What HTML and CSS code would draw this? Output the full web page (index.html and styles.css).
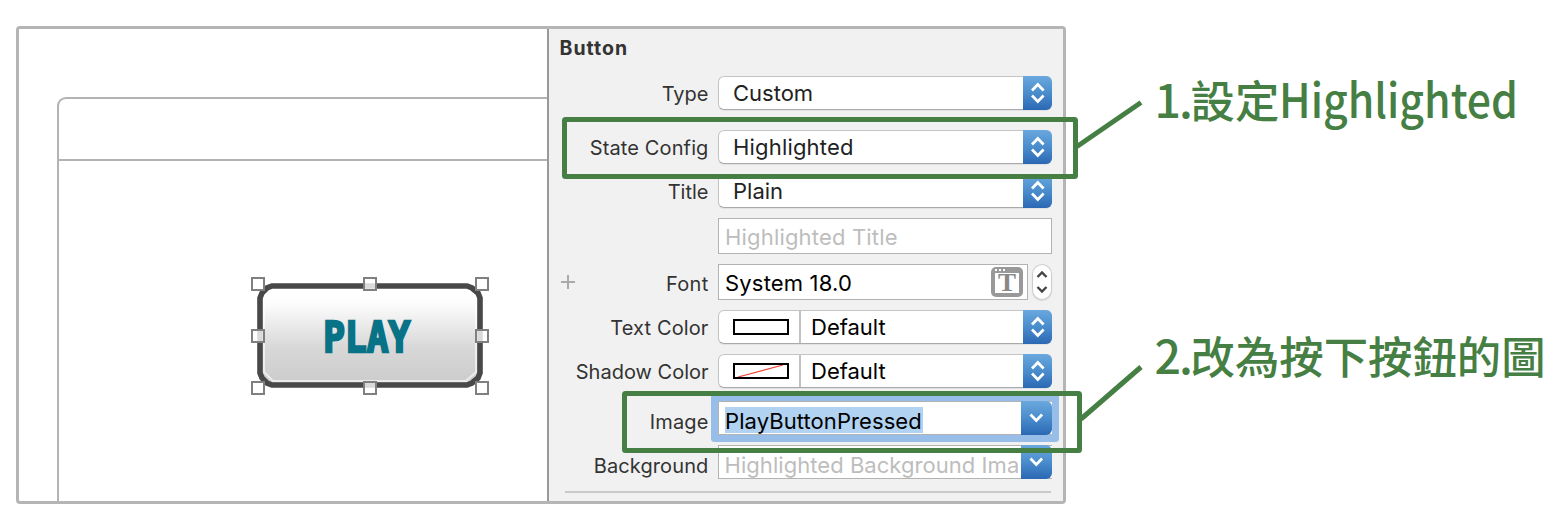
FILE: index.html
```html
<!DOCTYPE html>
<html lang="zh-Hant">
<head>
<meta charset="utf-8">
<title>Button inspector</title>
<link rel="stylesheet" href="styles.css">
</head>
<body>
<svg class="defs" width="0" height="0">
  <defs>
    <symbol id="updown" viewBox="0 0 28 34"><path d="M8.5 14.5 14.3 8.5 20.1 14.5M8.5 19.5 14.3 25.5 20.1 19.5"/></symbol>
    <symbol id="down" viewBox="0 0 31 34"><path d="M9.5 13.5 15.3 19.5 21.1 13.5"/></symbol>
  </defs>
</svg>
<div class="page">
  <main class="window">
    <section class="canvas">
      <div class="device">
        <div class="navbar"></div>
        <div class="stage">
          <div class="play">
            <svg class="play-art" width="240" height="120" viewBox="0 0 240 120">
              <defs><linearGradient id="face" x1="0" y1="0" x2="0" y2="1"><stop offset="0" stop-color="#fff"/><stop offset=".17" stop-color="#fdfdfd"/><stop offset=".62" stop-color="#d8d8d8"/><stop offset="1" stop-color="#cbcbcb"/></linearGradient></defs>
              <path d="M22 10H217L222 12 228 17 230 22V97L228 102 222 107 217 109H22L17 107 12 102 10 97V22L12 17 17 12Z" fill="url(#face)" stroke="#484848" stroke-width="5.6"/>
              <path d="M23 14H216L226 23V96L216 105H23L14 96V23Z" fill="none" stroke="#fff" stroke-opacity=".6" stroke-width="2"/>
              <g fill="#fff" fill-opacity=".8" stroke="#808080" stroke-width="2">
                <path d="M2 2H14V14H2ZM226 2H238V14H226ZM2 106H14V118H2ZM226 106H238V118H226Z" fill-opacity="1"/>
                <path d="M114 2H126V14H114ZM2 54H14V66H2ZM226 54H238V66H226ZM114 106H126V118H114Z"/>
              </g>
            </svg>
            <span class="play-text">PLAY</span>
          </div>
        </div>
      </div>
    </section>
    <section class="inspector">
      <h1 class="heading">Button</h1>
      <div class="row type"><span class="label">Type</span>
        <div class="popup"><span class="value">Custom</span><svg class="knob"><use href="#updown"/></svg></div></div>
      <div class="row state"><span class="label state-label">State Config</span>
        <div class="popup"><span class="value spaced">Highlighted</span><svg class="knob"><use href="#updown"/></svg></div></div>
      <div class="row"><span class="label">Title</span>
        <div class="popup"><span class="value">Plain</span><svg class="knob"><use href="#updown"/></svg></div></div>
      <div class="row"><span class="label"></span>
        <div class="field"><span class="hint spaced">Highlighted Title</span></div></div>
      <div class="row"><svg class="plus" width="14" height="14"><path d="M0 7H14M7 0V14"/></svg><span class="label font-label">Font</span>
        <div class="field font-field"><span class="spaced">System 18.0</span>
          <svg class="font-icon" width="32" height="30" viewBox="0 0 32 30"><rect width="32" height="30" rx="5" fill="#999"/><path d="M4 6H28V26H4Z" fill="#fff"/><path d="M4 2H6V4H4ZM8 2H10V4H8ZM12 2H14V4H12Z" fill="#fff"/><text x="16" y="24" text-anchor="middle" textLength="18" lengthAdjust="spacingAndGlyphs">T</text></svg></div>
        <svg class="stepper" width="20" height="36"><path d="M5.5 13 10 8.5 14.5 13M5.5 23 10 27.5 14.5 23"/></svg></div>
      <div class="row"><span class="label state-label">Text Color</span>
        <div class="popup"><span class="well"><i class="swatch"></i></span><span class="value">Default</span><svg class="knob"><use href="#updown"/></svg></div></div>
      <div class="row"><span class="label">Shadow Color</span>
        <div class="popup"><span class="well"><i class="swatch"><svg width="52" height="12"><path d="M3 12 48 0" stroke="#f04438" stroke-width="1.2"/></svg></i></span><span class="value">Default</span><svg class="knob"><use href="#updown"/></svg></div></div>
      <div class="row image"><span class="label low">Image</span>
        <div class="combo focused"><span class="selected">PlayButtonPressed</span><svg class="knob wide"><use href="#down"/></svg></div></div>
      <div class="row"><span class="label low">Background</span>
        <div class="combo"><span class="hint background-hint">Highlighted Background Ima</span><svg class="knob wide"><use href="#down"/></svg></div></div>
      <div class="rule"></div>
    </section>
  </main>
  <aside class="notes">
    <p class="note"><span class="number">1.</span>設定<span class="latin">Highlighted</span></p>
    <p class="note second"><span class="number">2.</span>改為按下按鈕的圖</p>
  </aside>
  <svg class="callouts" width="1565" height="526">
    <rect x="564.5" y="119.5" width="511" height="57" rx="1"/>
    <rect x="624.5" y="393.5" width="455" height="57" rx="1"/>
    <path d="M1077 146.5 1141 102.5M1081 419 1141 367"/>
  </svg>
</div>
</body>
</html>
```
FILE: styles.css
```css
* { box-sizing: border-box; }
body { margin: 0; background: #fff; font-family: Inter, "Liberation Sans", sans-serif; }
.defs { position: absolute; }
.page { position: relative; display: flex; width: 1565px; height: 526px; padding: 26px 0 0 16px; overflow: hidden; }
.window { display: flex; flex: none; width: 1050px; height: 478px; border: 3px solid #b5b5b5; border-radius: 4px; }
.canvas { width: 528px; padding: 68px 0 0 38px; overflow: hidden; }
.device { height: 404px; border: 2px solid #b3b3b3; border-width: 2px 0 0 2px; border-top-left-radius: 9px; }
.navbar { height: 62px; border-bottom: 2px solid #b3b3b3; }
.stage { padding: 115px 0 0 191px; }
.play { position: relative; width: 240px; height: 120px; display: flex; align-items: center; justify-content: center; }
.play-art { position: absolute; left: 0; top: 0; }
.play-text { position: relative; font: bold 43px/44px "DejaVu Sans Mono", monospace; color: #087286; transform: translate(-3px, 1px) scaleX(.84); -webkit-text-stroke: 2.4px #087286; text-shadow: 0 0 3px #f3dcdc; }

.inspector { width: 517px; padding: 6px 11px 0 10px; border-left: 2px solid #999; background: #f1f1f1; color: #333; }
.heading { margin: 0; height: 26px; padding-left: 1px; font-size: 19.5px; line-height: 26px; font-weight: 700; letter-spacing: 1px; }
.row { position: relative; display: flex; align-items: center; margin-bottom: 10px; }
.type { margin-top: 15px; margin-bottom: 20px; }
.image { margin-top: 13px; }
.label { width: 150px; margin-right: 9px; text-align: right; font-size: 20px; line-height: 30px; white-space: nowrap; padding-top: 2px; }
.state-label { letter-spacing: .12px; }
.font-label { padding-top: 4px; letter-spacing: .3px; }
.low { line-height: 24px; padding-top: 8px; letter-spacing: .12px; }
.plus { position: absolute; left: 2px; top: 11px; stroke: #aaa; stroke-width: 2; }
.popup { display: flex; align-items: stretch; width: 334px; height: 34px; border: 1px solid #c4c4c4; border-bottom-color: #aaa; border-radius: 6px; background: #fff; box-shadow: 0 1px 1px #0001; color: #222; font-size: 22px; line-height: 32px; }
.value { flex: 1; padding-left: 14.5px; white-space: nowrap; }
.spaced { letter-spacing: .18px; }
.knob { flex: none; width: 29px; height: 34px; margin: -1px -1px -1px 0; border-radius: 0 6px 6px 0; background: linear-gradient(#6aa8dd, #4a8dcd 50%, #2b68b4); fill: none; stroke: #fff; stroke-width: 2.7; }
.wide { width: 31px; }
.well { width: 82px; padding: 8px 0 0 14px; border-right: 2px solid #c2c2c2; }
.well + .value { padding-left: 10.5px; color: #000; }
.swatch { display: block; width: 56px; height: 16px; border: 2px solid #000; }
.swatch svg { display: block; }
.field { display: flex; align-items: center; justify-content: space-between; width: 334px; height: 36px; padding-left: 6.5px; padding-top: 2px; border: 1px solid #b3b3b3; background: #fff; color: #000; font-size: 22px; line-height: 32px; white-space: nowrap; }
.hint { color: #bdbdbd; }
.background-hint { padding-top: 6px; letter-spacing: .05px; }
.font-field { width: 310px; padding-right: 4px; }
.font-icon { margin-top: -2px; font: bold 25px "Liberation Serif", serif; fill: #888; }
.stepper { margin-left: 4px; border-radius: 10px; background: #fff; box-shadow: 0 0 0 1px #ccc inset, 0 1px 1px #0002; fill: none; stroke: #444; stroke-width: 2.4; }
.combo { display: flex; align-items: center; justify-content: space-between; width: 334px; height: 34px; padding-left: 6px; border: 1px solid #b3b3b3; border-right: 0; background: #fff; font-size: 22px; line-height: 26px; color: #000; white-space: nowrap; }
.combo .knob { margin-right: 0; }
.focused { box-shadow: 0 0 0 7px #96bee8; border-radius: 1px; }
.selected { height: 26px; width: 198px; margin-top: 3px; background: #b1d2f1; padding: 1px 0 0 .5px; letter-spacing: .08px; }
.rule { height: 2px; margin: 12px 0 0 6px; width: 486px; background: #c9c9c9; }

.notes { padding: 42px 0 0 86px; color: #467f43; font-family: "Noto Sans CJK TC", sans-serif; font-weight: 500; font-size: 44.4px; line-height: 60px; white-space: nowrap; }
.note { margin: 0; height: 60px; }
.number { display: inline-block; width: 38.5px; padding-left: 2.5px; font-size: 46.5px; letter-spacing: -2px; }
.latin { display: inline-block; font-size: 47px; transform: scaleX(.91); transform-origin: 0 0; }
.second { margin-top: 196px; }
.callouts { position: absolute; left: 0; top: 0; fill: none; stroke: #467f43; stroke-width: 5; }
```
